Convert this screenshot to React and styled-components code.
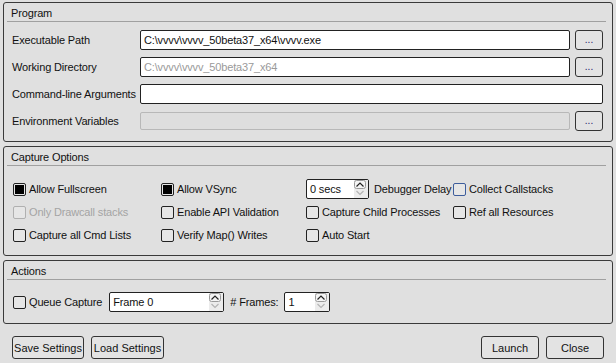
import React from 'react'
import styled, { createGlobalStyle } from 'styled-components'

const GlobalStyle = createGlobalStyle`
  html, body {
    margin: 0;
    padding: 0;
    background: #e0e0e0;
  }
  * {
    box-sizing: border-box;
  }
`

function Checkbox({ checked, disabled, focused, children }) {
  return (
    <CheckLabel disabled={disabled}>
      <Box checked={checked} disabled={disabled} focused={focused} />
      {children}
    </CheckLabel>
  )
}

function SpinBox({ value, width }) {
  return (
    <Spin style={{ width }}>
      <SpinValue>{value}</SpinValue>
      <SpinArrows>
        <svg width='12' height='18' viewBox='0 0 12 18'>
          <rect x='0.5' y='0.5' width='11' height='8' rx='2' fill='#f4f4f4' stroke='#9a9a9a' />
          <path d='M2.5 6.5 L6 3 L9.5 6.5' fill='none' stroke='#222' strokeWidth='1.2' />
          <path d='M2.5 11 L6 14.5 L9.5 11' fill='none' stroke='#b4b4b4' strokeWidth='1.2' />
        </svg>
      </SpinArrows>
    </Spin>
  )
}

function App() {
  return (
    <>
      <GlobalStyle />
      <Window>
        <Group>
          <GroupTitle>Program</GroupTitle>
          <ProgramGrid>
            <Label>Executable Path</Label>
            <Field>C:\vvvv\vvvv_50beta37_x64\vvvv.exe</Field>
            <Browse>...</Browse>

            <Label>Working Directory</Label>
            <Field placeholder>C:\vvvv\vvvv_50beta37_x64</Field>
            <Browse>...</Browse>

            <Label>Command-line Arguments</Label>
            <Field wide />

            <Label>Environment Variables</Label>
            <Field disabled />
            <Browse>...</Browse>
          </ProgramGrid>
        </Group>

        <Group>
          <GroupTitle>Capture Options</GroupTitle>
          <OptionsGrid>
            <Checkbox checked>Allow Fullscreen</Checkbox>
            <Checkbox checked>Allow VSync</Checkbox>
            <Inline>
              <SpinBox value='0 secs' width='63px' />
              <span>Debugger Delay</span>
            </Inline>
            <Checkbox focused>Collect Callstacks</Checkbox>

            <Checkbox disabled>Only Drawcall stacks</Checkbox>
            <Checkbox>Enable API Validation</Checkbox>
            <Checkbox>Capture Child Processes</Checkbox>
            <Checkbox>Ref all Resources</Checkbox>

            <Checkbox>Capture all Cmd Lists</Checkbox>
            <Checkbox>Verify Map() Writes</Checkbox>
            <Checkbox>Auto Start</Checkbox>
          </OptionsGrid>
        </Group>

        <Group>
          <GroupTitle>Actions</GroupTitle>
          <ActionsRow>
            <Checkbox>Queue Capture</Checkbox>
            <SpinBox value='Frame 0' width='115px' />
            <span># Frames:</span>
            <SpinBox value='1' width='46px' />
          </ActionsRow>
        </Group>

        <Footer>
          <Button w='72px'>Save Settings</Button>
          <Button w='73px'>Load Settings</Button>
          <Spacer />
          <Button w='58px'>Launch</Button>
          <Button w='58px'>Close</Button>
        </Footer>
      </Window>
    </>
  )
}

export default App

const Window = styled.div`
  width: 616px;
  height: 363px;
  padding: 2px 3px 0 3px;
  display: flex;
  flex-direction: column;
  gap: 4px;
  background: #e0e0e0;
  font-family: 'Liberation Sans', Arial, sans-serif;
  font-size: 11px;
  letter-spacing: -0.15px;
  color: #111;
`

const Group = styled.section`
  border: 1px solid #3a3a3a;
  border-radius: 3px;
`

const GroupTitle = styled.div`
  height: 19px;
  margin: 0 6px 0 3px;
  padding: 4px 0 0 4px;
  border-bottom: 1px solid #a0a0a0;
  line-height: 13px;
`

const ProgramGrid = styled.div`
  display: grid;
  grid-template-columns: 123px 1fr 28px;
  grid-auto-rows: 20px;
  column-gap: 5px;
  row-gap: 7px;
  align-items: center;
  padding: 8px 9px 10px 8px;
`

const Label = styled.div`
  white-space: nowrap;
`

const Field = styled.div`
  grid-column: ${p => (p.wide ? 'span 2' : 'auto')};
  height: ${p => (p.disabled ? '18px' : '20px')};
  padding: 0 3px;
  line-height: 18px;
  white-space: nowrap;
  overflow: hidden;
  border: 1px solid ${p => (p.disabled ? '#b8b8b8' : '#222')};
  border-radius: 2px;
  background: ${p => (p.disabled ? '#dedede' : '#fff')};
  color: ${p => (p.placeholder ? '#9a9a9a' : '#111')};
`

const Browse = styled.button`
  height: 20px;
  padding: 0;
  border: 1px solid #333;
  border-radius: 3px;
  background: #e3e3e3;
  font: inherit;
  font-size: 10px;
  line-height: 14px;
  color: #1a1a6a;
`

const OptionsGrid = styled.div`
  display: grid;
  grid-template-columns: 148px 145px 147px auto;
  grid-auto-rows: 20px;
  row-gap: 3px;
  align-items: center;
  padding: 13px 9px 10px 9px;
`

const CheckLabel = styled.label`
  display: flex;
  align-items: center;
  gap: 3px;
  white-space: nowrap;
  color: ${p => (p.disabled ? '#a4a4a4' : '#111')};
`

const Box = styled.span`
  position: relative;
  width: 13px;
  height: 13px;
  flex: none;
  border: 1px solid ${p => (p.disabled ? '#b0b0b0' : p.focused ? '#3d5d9c' : '#222')};
  border-radius: 2px;
  background: #e6e6e6;

  &::after {
    content: '';
    position: absolute;
    inset: 1px;
    background: ${p => (p.checked ? '#000' : 'transparent')};
  }
`

const Inline = styled.div`
  display: flex;
  align-items: center;
  gap: 5px;
  white-space: nowrap;
`

const Spin = styled.div`
  display: flex;
  align-items: center;
  height: 20px;
  border: 1px solid #222;
  border-radius: 2px;
  background: #fff;
`

const SpinValue = styled.span`
  flex: 1;
  padding-left: 3px;
  white-space: nowrap;
`

const SpinArrows = styled.span`
  display: flex;
  align-items: center;
  width: 14px;
  height: 18px;
  background: #ececec;
`

const ActionsRow = styled.div`
  display: flex;
  align-items: center;
  gap: 6px;
  height: 20px;
  margin: 12px 0 11px 9px;

  & > label {
    margin-right: 1px;
  }
`

const Footer = styled.div`
  display: flex;
  align-items: center;
  gap: 7px;
  margin-top: 8px;
  padding: 0 9px 0 9px;
`

const Spacer = styled.div`
  flex: 1;
`

const Button = styled.button`
  width: ${p => p.w};
  height: 23px;
  padding: 0;
  border: 1px solid #333;
  border-radius: 3px;
  background: #e3e3e3;
  font: inherit;
  color: #111;
`
